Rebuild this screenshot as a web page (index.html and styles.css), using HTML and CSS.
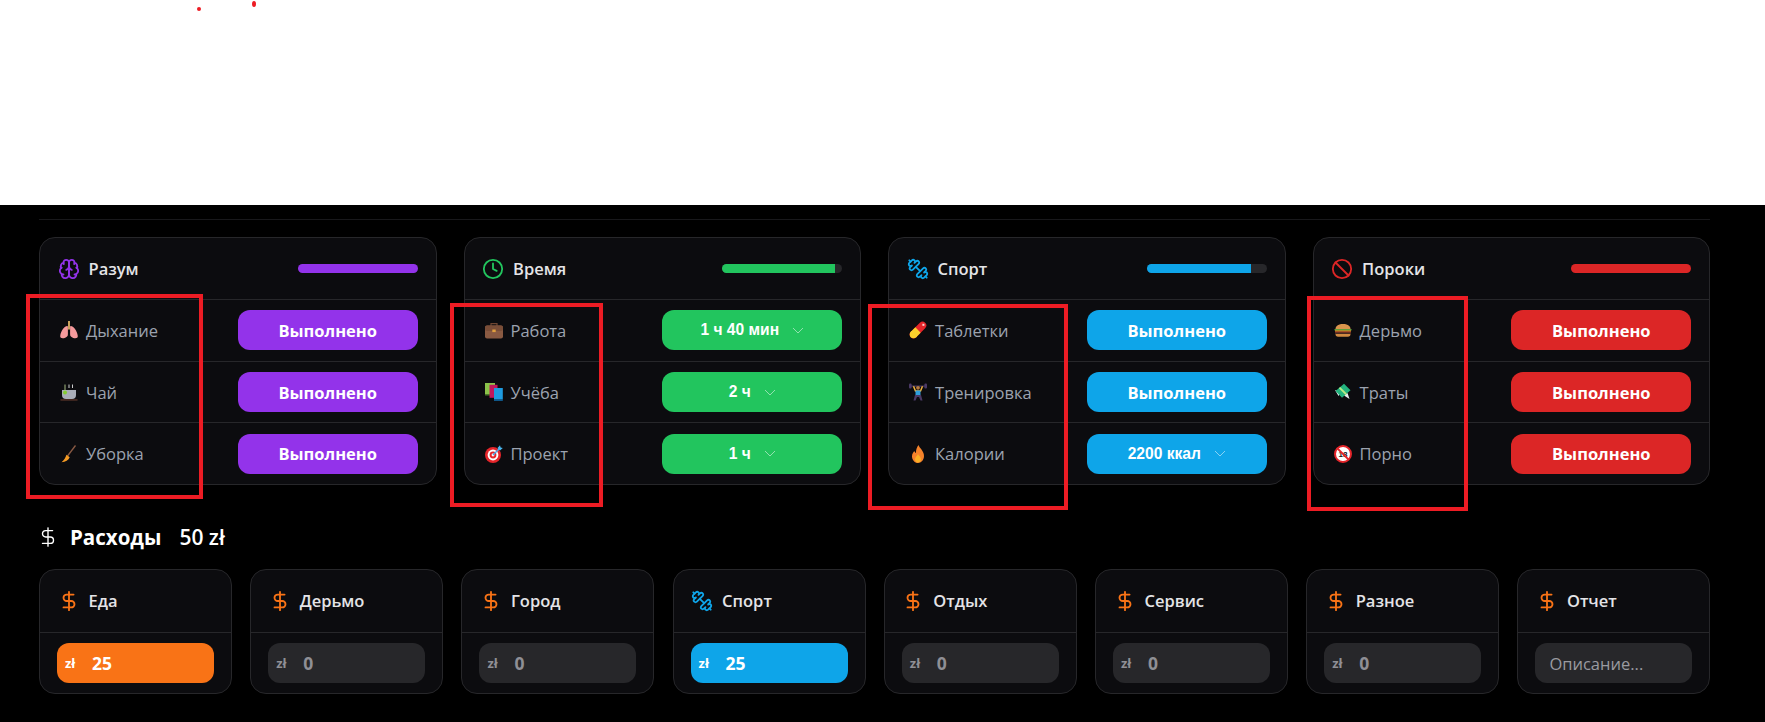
FILE: index.html
```html
<!DOCTYPE html>
<html>
<head>
    <title>Трекер</title>
    <link rel="stylesheet" href="styles.css">
</head>
<body>
    <svg class="defs" xmlns="http://www.w3.org/2000/svg">
        <symbol id="i-brain" viewBox="0 0 24 24"><path d="M12 5a3 3 0 1 0-5.997.125 4 4 0 0 0-2.526 5.77 4 4 0 0 0 .556 6.588A4 4 0 1 0 12 18Z"/><path d="M12 5a3 3 0 1 1 5.997.125 4 4 0 0 1 2.526 5.77 4 4 0 0 1-.556 6.588A4 4 0 1 1 12 18Z"/><path d="M15 13a4.5 4.5 0 0 1-3-4 4.5 4.5 0 0 1-3 4"/><path d="M17.599 6.5a3 3 0 0 0 .399-1.375"/><path d="M6.003 5.125A3 3 0 0 0 6.401 6.5"/><path d="M3.477 10.896a4 4 0 0 1 .585-.396"/><path d="M19.938 10.5a4 4 0 0 1 .585.396"/><path d="M6 18a4 4 0 0 1-1.967-.516"/><path d="M19.967 17.484A4 4 0 0 1 18 18"/></symbol>
        <symbol id="i-clock" viewBox="0 0 24 24"><circle cx="12" cy="12" r="10"/><polyline points="12 6 12 12 16 14"/></symbol>
        <symbol id="i-dumbbell" viewBox="0 0 24 24"><path d="M14.4 14.4 9.6 9.6"/><path d="M18.657 21.485a2 2 0 1 1-2.829-2.828l-1.767 1.768a2 2 0 1 1-2.829-2.829l6.364-6.364a2 2 0 1 1 2.829 2.829l-1.768 1.767a2 2 0 1 1 2.828 2.829z"/><path d="m21.5 21.5-1.4-1.4"/><path d="M3.9 3.9 2.5 2.5"/><path d="M6.404 12.768a2 2 0 1 1-2.829-2.829l1.768-1.767a2 2 0 1 1-2.828-2.829l2.828-2.828a2 2 0 1 1 2.829 2.828l1.767-1.768a2 2 0 1 1 2.829 2.829z"/></symbol>
        <symbol id="i-ban" viewBox="0 0 24 24"><circle cx="12" cy="12" r="10"/><path d="m4.9 4.9 14.2 14.2"/></symbol>
        <symbol id="i-dollar" viewBox="0 0 24 24"><line x1="12" x2="12" y1="2" y2="22"/><path d="M17 5H9.5a3.5 3.5 0 0 0 0 7h5a3.5 3.5 0 0 1 0 7H6"/></symbol>
        <symbol id="i-chevron" viewBox="0 0 12 7"><path d="M1 1l5 5 5-5"/></symbol>

        <symbol id="e-lungs" viewBox="0 0 18 18"><path fill="#f59a9c" d="M7.6 5C5 4.500 .8 9.500 .2 15c-.2 2.600 2.800 2.600 5 1.700 2-.8 2.700-1.500 2.700-3.700V6z"/><path fill="#f59a9c" d="M10.400 5c2.600-.5 6.800 4.500 7.400 10 .2 2.600-2.800 2.600-5 1.700-2-.8-2.700-1.500-2.700-3.700V6z"/><rect x="8" y="0" width="2" height="8.500" fill="#c9a15c"/></symbol>
        <symbol id="e-tea" viewBox="0 0 18 18"><path fill="#a9adb8" d="M2 7h14v5a4 4 0 0 1-4 4H6a4 4 0 0 1-4-4z"/><path stroke="#fff" stroke-width=".8" fill="none" d="M9 1.500v3.500M12.500 1.500v3.500"/><path stroke="#cfe8a0" stroke-width=".8" fill="none" d="M5 1.500V8"/><circle cx="5" cy="9.500" r="2" fill="#84cc30"/><rect x=".5" y="16.400" width="17" height="1.100" fill="#6b3d2e"/></symbol>
        <symbol id="e-broom" viewBox="0 0 18 18"><path stroke="#8a5a44" stroke-width="1.300" fill="none" d="M15.500 .5 7.500 11"/><path fill="#f59a23" d="M6.500 9.800l3.200 2.400C8.600 15 5.500 17 1.500 17.300 4.300 15 5.500 12.500 6.500 9.800z"/></symbol>
        <symbol id="e-case" viewBox="0 0 18 18"><path fill="none" stroke="#6f4632" stroke-width="1.200" d="M6 5V2.600h6V5"/><rect y="4.500" width="18" height="13" rx="2" fill="#8a5a42"/><rect y="4.500" width="18" height="5.500" rx="2" fill="#7a4e38"/><rect x="7.300" y="8.500" width="3.400" height="2.600" fill="#e09f3e"/></symbol>
        <symbol id="e-books" viewBox="0 0 18 18"><rect x="0" y="0" width="10" height="11" fill="#8bc34a"/><rect x="0" y="11" width="10" height="1.500" fill="#4a7a28"/><rect x="4.500" y="1.800" width="8" height="13" fill="#c2185b"/><rect x="9" y="5" width="8.800" height="11.500" fill="#1e9be0"/><rect x="9" y="16.500" width="8.800" height="1.300" fill="#0f6aa8"/></symbol>
        <symbol id="e-target" viewBox="0 0 18 18"><circle cx="8" cy="10" r="8" fill="#e5252a"/><circle cx="8" cy="10" r="5.400" fill="#fff"/><circle cx="8" cy="10" r="3.400" fill="#e5252a"/><circle cx="8" cy="10" r="1.400" fill="#fff"/><path stroke="#4aa8e8" stroke-width="1.400" d="M8 10 15 3"/><path fill="#4ab8f0" d="M12.500 3 15 .3l.6 2.200 2.200.6L15 5.500z"/></symbol>
        <symbol id="e-pill" viewBox="0 0 18 18"><path stroke="#e5252a" stroke-width="7.500" stroke-linecap="round" d="M4.500 13.500 13.500 4.500"/><path stroke="#fbd12c" stroke-width="7.500" d="M4.500 13.500 9 9"/><circle cx="4.500" cy="13.500" r="3.750" fill="#fbd12c"/><rect x="13.400" y="2.800" width="2" height="2" fill="#fbd5d5"/></symbol>
        <symbol id="e-lifter" viewBox="0 0 18 18"><rect x="1" y="2.500" width="16" height="1.200" fill="#4b3a66"/><rect x="0" y=".5" width="2.600" height="5" rx="1" fill="#4b3a66"/><rect x="15.400" y=".5" width="2.600" height="5" rx="1" fill="#4b3a66"/><path stroke="#f2b33a" stroke-width="1.500" fill="none" d="M4.500 3.200 6.500 8h5l2-4.800"/><circle cx="9" cy="4.800" r="1.900" fill="#b57a3e"/><rect x="6.500" y="7.500" width="5" height="4.500" fill="#2f9fdc"/><path fill="#4b3a66" d="M6 12h6l1.500 5.500h-2L10 14H8l-1.500 3.500h-2z"/></symbol>
        <symbol id="e-fire" viewBox="0 0 18 18"><path fill="#f5822a" d="M9.500 0c.6 3 5.500 5.500 5.500 11 0 4-2.800 7-6 7s-6-3-6-6.800c0-2.500 1.400-3.900 2.300-5.200.5 1.200 1 1.700 1.700 2C6.800 5.200 7.800 2 9.500 0z"/><path fill="#fbbf24" d="M9 9c.5 1.700 3 2.800 3 5.300 0 1.900-1.400 3.200-3 3.200s-3-1.300-3-3.200C6 12 8.300 11 9 9z" opacity=".75"/></symbol>
        <symbol id="e-burger" viewBox="0 0 18 18"><path fill="#d9944c" d="M1.500 8C1.500 4.500 5 3 9 3s7.500 1.500 7.500 5z"/><rect x=".5" y="8" width="17" height="1.400" fill="#5f9e3a"/><rect x="1" y="9.400" width="16" height="1.100" fill="#f2c230"/><rect x="1" y="10.500" width="16" height="1.100" fill="#d4452c"/><rect x="1" y="11.600" width="16" height="1.300" fill="#4f3024"/><path fill="#d08a42" d="M1.500 12.900h15c0 1.800-1 2.800-2.500 2.800H4c-1.500 0-2.500-1-2.500-2.800z"/></symbol>
        <symbol id="e-money" viewBox="0 0 18 18"><path fill="#e8ecef" d="M1 7 7 9l-2.500 4zM10 12.500l5.500 3.500-2-6z"/><path fill="#24b47e" d="M1.500 8 10 .8l6.500 6.500-8.500 7.500z"/><path fill="#b8e986" d="M6.200 4 13 10.800l-1.400 1.200L4.800 5.200z"/></symbol>
        <symbol id="e-no18" viewBox="0 0 18 18"><circle cx="9" cy="9" r="8" fill="#fff" stroke="#e5252a" stroke-width="2"/><text x="9" y="12.200" class="no18-text" text-anchor="middle">18</text><path stroke="#e5252a" stroke-width="1.800" d="M3.500 3.500l11 11"/></symbol>
    </svg>

    <div class="canvas">
        <span class="dot dot-a"></span>
        <span class="dot dot-b"></span>
    </div>

    <main class="board">
        <div class="board-inner">
            <section class="habits">
                <div class="card">
                    <div class="card-head">
                        <div class="card-title"><svg class="icon c-purple"><use href="#i-brain"/></svg><span>Разум</span></div>
                        <div class="bar"><div class="bar-fill bg-purple" style="width: 100%"></div></div>
                    </div>
                    <div class="row">
                        <div class="label"><svg class="emoji"><use href="#e-lungs"/></svg>Дыхание</div>
                        <button class="action bg-purple" type="button">Выполнено</button>
                    </div>
                    <div class="row">
                        <div class="label"><svg class="emoji"><use href="#e-tea"/></svg>Чай</div>
                        <button class="action bg-purple" type="button">Выполнено</button>
                    </div>
                    <div class="row">
                        <div class="label"><svg class="emoji"><use href="#e-broom"/></svg>Уборка</div>
                        <button class="action bg-purple" type="button">Выполнено</button>
                    </div>
                </div>

                <div class="card">
                    <div class="card-head">
                        <div class="card-title"><svg class="icon c-green"><use href="#i-clock"/></svg><span>Время</span></div>
                        <div class="bar"><div class="bar-fill bg-green" style="width: 94%"></div></div>
                    </div>
                    <div class="row">
                        <div class="label"><svg class="emoji"><use href="#e-case"/></svg>Работа</div>
                        <button class="action picker bg-green" type="button">1 ч 40 мин<svg class="chevron"><use href="#i-chevron"/></svg></button>
                    </div>
                    <div class="row">
                        <div class="label"><svg class="emoji"><use href="#e-books"/></svg>Учёба</div>
                        <button class="action picker bg-green" type="button">2 ч<svg class="chevron"><use href="#i-chevron"/></svg></button>
                    </div>
                    <div class="row">
                        <div class="label"><svg class="emoji"><use href="#e-target"/></svg>Проект</div>
                        <button class="action picker bg-green" type="button">1 ч<svg class="chevron"><use href="#i-chevron"/></svg></button>
                    </div>
                </div>

                <div class="card">
                    <div class="card-head">
                        <div class="card-title"><svg class="icon c-sky"><use href="#i-dumbbell"/></svg><span>Спорт</span></div>
                        <div class="bar"><div class="bar-fill bg-sky" style="width: 87%"></div></div>
                    </div>
                    <div class="row">
                        <div class="label"><svg class="emoji"><use href="#e-pill"/></svg>Таблетки</div>
                        <button class="action bg-sky" type="button">Выполнено</button>
                    </div>
                    <div class="row">
                        <div class="label"><svg class="emoji"><use href="#e-lifter"/></svg>Тренировка</div>
                        <button class="action bg-sky" type="button">Выполнено</button>
                    </div>
                    <div class="row">
                        <div class="label"><svg class="emoji"><use href="#e-fire"/></svg>Калории</div>
                        <button class="action picker bg-sky" type="button">2200 ккал<svg class="chevron"><use href="#i-chevron"/></svg></button>
                    </div>
                </div>

                <div class="card">
                    <div class="card-head">
                        <div class="card-title"><svg class="icon c-red"><use href="#i-ban"/></svg><span>Пороки</span></div>
                        <div class="bar"><div class="bar-fill bg-red" style="width: 100%"></div></div>
                    </div>
                    <div class="row">
                        <div class="label"><svg class="emoji"><use href="#e-burger"/></svg>Дерьмо</div>
                        <button class="action bg-red" type="button">Выполнено</button>
                    </div>
                    <div class="row">
                        <div class="label"><svg class="emoji"><use href="#e-money"/></svg>Траты</div>
                        <button class="action bg-red" type="button">Выполнено</button>
                    </div>
                    <div class="row">
                        <div class="label"><svg class="emoji"><use href="#e-no18"/></svg>Порно</div>
                        <button class="action bg-red" type="button">Выполнено</button>
                    </div>
                </div>
            </section>

            <h2 class="spend-title">
                <svg class="icon icon-thin"><use href="#i-dollar"/></svg>
                <span class="spend-name">Расходы</span>
                <span class="spend-sum">50 zł</span>
            </h2>

            <section class="spend">
                <div class="card">
                    <div class="card-head"><div class="card-title"><svg class="icon c-orange"><use href="#i-dollar"/></svg><span>Еда</span></div></div>
                    <div class="spend-body"><div class="amount bg-orange"><span class="cur">zł</span><span class="val">25</span></div></div>
                </div>
                <div class="card">
                    <div class="card-head"><div class="card-title"><svg class="icon c-orange"><use href="#i-dollar"/></svg><span>Дерьмо</span></div></div>
                    <div class="spend-body"><div class="amount"><span class="cur">zł</span><span class="val">0</span></div></div>
                </div>
                <div class="card">
                    <div class="card-head"><div class="card-title"><svg class="icon c-orange"><use href="#i-dollar"/></svg><span>Город</span></div></div>
                    <div class="spend-body"><div class="amount"><span class="cur">zł</span><span class="val">0</span></div></div>
                </div>
                <div class="card">
                    <div class="card-head"><div class="card-title"><svg class="icon c-sky"><use href="#i-dumbbell"/></svg><span>Спорт</span></div></div>
                    <div class="spend-body"><div class="amount bg-sky"><span class="cur">zł</span><span class="val">25</span></div></div>
                </div>
                <div class="card">
                    <div class="card-head"><div class="card-title"><svg class="icon c-orange"><use href="#i-dollar"/></svg><span>Отдых</span></div></div>
                    <div class="spend-body"><div class="amount"><span class="cur">zł</span><span class="val">0</span></div></div>
                </div>
                <div class="card">
                    <div class="card-head"><div class="card-title"><svg class="icon c-orange"><use href="#i-dollar"/></svg><span>Сервис</span></div></div>
                    <div class="spend-body"><div class="amount"><span class="cur">zł</span><span class="val">0</span></div></div>
                </div>
                <div class="card">
                    <div class="card-head"><div class="card-title"><svg class="icon c-orange"><use href="#i-dollar"/></svg><span>Разное</span></div></div>
                    <div class="spend-body"><div class="amount"><span class="cur">zł</span><span class="val">0</span></div></div>
                </div>
                <div class="card">
                    <div class="card-head"><div class="card-title"><svg class="icon c-orange"><use href="#i-dollar"/></svg><span>Отчет</span></div></div>
                    <div class="spend-body"><input class="note" type="text" placeholder="Описание..."></div>
                </div>
            </section>
        </div>
    </main>

    <!-- red boxes drawn on top of the screenshot -->
    <div class="mark mark-1"></div>
    <div class="mark mark-2"></div>
    <div class="mark mark-3"></div>
    <div class="mark mark-4"></div>
</body>
</html>
```

FILE: styles.css
```css
* {
    box-sizing: border-box;
}

html, body {
    height: 722px;
    margin: 0;
    overflow: hidden;
}

body {
    position: relative;
    background-color: #000;
    font-family: "Open Sans", "Noto Sans", sans-serif;
}

.defs {
    display: none;
}

.canvas {
    position: relative;
    height: 205px;
    background-color: #fff;
}

.dot {
    position: absolute;
    background-color: #ed1c24;
    border-radius: 50%;
}

.dot-a {
    left: 197px;
    top: 7px;
    width: 4px;
    height: 4px;
}

.dot-b {
    left: 252px;
    top: 1px;
    width: 4px;
    height: 6px;
}

.board {
    padding: 14px 54.7px 0 39px;
}

.board-inner {
    padding-top: 17px;
    border-top: 1px solid #18181b;
}

.habits {
    display: grid;
    grid-template-columns: repeat(4, 1fr);
    gap: 26.8px;
}

.spend {
    display: grid;
    grid-template-columns: repeat(8, 1fr);
    gap: 18.3px;
}

.card {
    background-color: #0c0c0f;
    border: 1px solid #27272a;
    border-radius: 16px;
    overflow: hidden;
}

.card-head {
    display: flex;
    align-items: center;
    justify-content: space-between;
    height: 61px;
    padding: 0 18px 0 17.5px;
}

.spend .card-head {
    height: 61.5px;
}

.card-title {
    display: flex;
    align-items: center;
    gap: 9px;
    color: #e4e4e7;
    font-size: 16.5px;
    font-weight: 600;
}

.icon {
    width: 22px;
    height: 22px;
    fill: none;
    stroke: currentColor;
    stroke-width: 2;
    stroke-linecap: round;
    stroke-linejoin: round;
}

.icon-thin {
    color: #fff;
    stroke-width: 1.5;
}

.c-purple { color: #9333ea; }
.c-green { color: #22c55e; }
.c-sky { color: #0ea5e9; }
.c-red { color: #dc2626; }
.c-orange { color: #f97316; }

.bg-purple { background-color: #9333ea; }
.bg-green { background-color: #22c55e; }
.bg-sky { background-color: #0ea5e9; }
.bg-red { background-color: #dc2626; }
.bg-orange { background-color: #f97316; }

.bar {
    width: 120px;
    height: 9px;
    background-color: #27272a;
    border-radius: 5px;
    overflow: hidden;
}

.bar-fill {
    height: 100%;
}

.row {
    display: flex;
    align-items: center;
    justify-content: space-between;
    height: 61.7px;
    padding: 0 18px 0 20px;
    border-top: 1px solid #27272a;
}

.label {
    display: flex;
    align-items: center;
    gap: 8px;
    color: #9ca3af;
    font-size: 16.5px;
}

.emoji {
    width: 18px;
    height: 18px;
    flex-shrink: 0;
}

.no18-text {
    font-family: "Liberation Sans", sans-serif;
    font-size: 8px;
    font-weight: 700;
    fill: #111;
}

.action {
    display: flex;
    align-items: center;
    justify-content: center;
    width: 180px;
    height: 40px;
    border: none;
    border-radius: 12px;
    color: #fff;
    font-family: "Open Sans", "Noto Sans", sans-serif;
    font-size: 16.5px;
    font-weight: 700;
    cursor: pointer;
}

.picker {
    gap: 13px;
    font-family: "Liberation Sans", sans-serif;
    font-size: 15.6px;
}

.chevron {
    width: 12px;
    height: 7px;
    fill: none;
    stroke: rgba(255, 255, 255, 0.5);
    stroke-width: 1;
}

.spend-title {
    display: flex;
    align-items: center;
    height: 32px;
    margin: 36px 0 16px 0;
    color: #fff;
    font-size: 20.5px;
    font-weight: 400;
}

.spend-title .icon {
    margin-right: 11px;
    margin-left: -2px;
}

.spend-name {
    font-weight: 700;
    margin-right: 18px;
}

.spend-sum {
    font-size: 21px;
    font-weight: 600;
}

.spend-body {
    height: 61.5px;
    padding: 10.5px 17px 10px 17px;
    border-top: 1px solid #27272a;
}

.amount {
    display: flex;
    align-items: center;
    height: 40px;
    padding-left: 8px;
    background-color: #27272a;
    border-radius: 12px;
    color: #8f8f95;
    font-weight: 700;
}

.amount.bg-orange, .amount.bg-sky {
    color: #fff;
}

.amount.bg-orange {
    background-color: #f97316;
}

.amount.bg-sky {
    background-color: #0ea5e9;
}

.cur {
    width: 27px;
    font-size: 13px;
}

.val {
    font-size: 17.5px;
    font-weight: 700;
}

.note {
    display: block;
    width: 100%;
    height: 40px;
    padding: 0 14px;
    background-color: #27272a;
    border: none;
    border-radius: 12px;
    color: #fff;
    font-family: "Open Sans", "Noto Sans", sans-serif;
    font-size: 16.5px;
}

.note::placeholder {
    color: #9a9aa0;
}

.mark {
    position: absolute;
    border: 4px solid #ed1c24;
}

.mark-1 {
    left: 26px;
    top: 294px;
    width: 177px;
    height: 205px;
}

.mark-2 {
    left: 450px;
    top: 303px;
    width: 153px;
    height: 204px;
}

.mark-3 {
    left: 868px;
    top: 304px;
    width: 200px;
    height: 206px;
}

.mark-4 {
    left: 1307px;
    top: 296px;
    width: 161px;
    height: 215px;
}
```
